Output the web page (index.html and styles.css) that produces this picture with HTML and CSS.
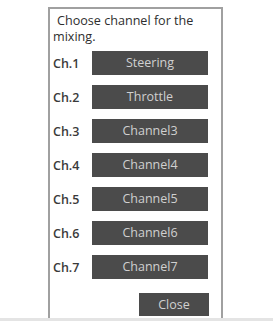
FILE: index.html
```html
<!DOCTYPE html>
<html>
<head>
	<meta charset="utf-8">
	<title>Mixing channel</title>
	<link rel="stylesheet" href="styles.css">
</head>
<body>
	<div class="page">
		<!-- channel chooser panel -->
		<div class="panel">
			<p class="panel-title">Choose channel for the mixing.</p>
			<ul class="ch-list">
				<li class="ch-row"><span class="ch-label">Ch.1</span><a href="#" class="ch-btn">Steering</a></li>
				<li class="ch-row"><span class="ch-label">Ch.2</span><a href="#" class="ch-btn">Throttle</a></li>
				<li class="ch-row"><span class="ch-label">Ch.3</span><a href="#" class="ch-btn">Channel3</a></li>
				<li class="ch-row"><span class="ch-label">Ch.4</span><a href="#" class="ch-btn">Channel4</a></li>
				<li class="ch-row"><span class="ch-label">Ch.5</span><a href="#" class="ch-btn">Channel5</a></li>
				<li class="ch-row"><span class="ch-label">Ch.6</span><a href="#" class="ch-btn">Channel6</a></li>
				<li class="ch-row"><span class="ch-label">Ch.7</span><a href="#" class="ch-btn">Channel7</a></li>
			</ul>
			<div class="panel-foot">
				<a href="#" class="close-btn">Close</a>
			</div>
		</div>
		<!-- bottom bar -->
		<div class="bottom-strip"></div>
	</div>
</body>
</html>
```

FILE: styles.css
```css
body {
	margin: 0;
	font-family: "Open Sans", "DejaVu Sans", Arial, sans-serif;
	color: #333;
	background: #fff;
}
.page {
	height: 321px;
	display: flex;
	flex-direction: column;
}
.panel {
	flex: 1;
	box-sizing: border-box;
	width: 175px;
	margin: 7px 0 0 48px;
	border: 2px solid #a0a0a0;
	border-bottom: none;
	padding: 4px 12px 0 3px;
	display: flex;
	flex-direction: column;
}
.panel-title {
	margin: 0;
	font-size: 12.6px;
	line-height: 16px;
	text-indent: 4px;
	color: #2e2e2e;
}
.ch-list {
	list-style: none;
	margin: 6px 0 0 0;
	padding: 0;
	display: flex;
	flex-direction: column;
	gap: 10px;
}
.ch-row {
	display: flex;
	align-items: center;
	height: 24px;
}
.ch-label {
	width: 39px;
	font-size: 12.5px;
	font-weight: 600;
	color: #3a3a3a;
}
.ch-btn, .close-btn {
	display: block;
	background: #4b4b4b;
	color: #d0d0d0;
	text-decoration: none;
	text-align: center;
	font-size: 12.5px;
}
.ch-btn {
	width: 116px;
	height: 24px;
	line-height: 24px;
}
.panel-foot {
	display: flex;
	justify-content: flex-end;
	margin-top: 14px;
}
.close-btn {
	width: 70px;
	height: 23px;
	line-height: 23px;
}
.bottom-strip {
	height: 3px;
	background: #e4e4e4;
}
```
